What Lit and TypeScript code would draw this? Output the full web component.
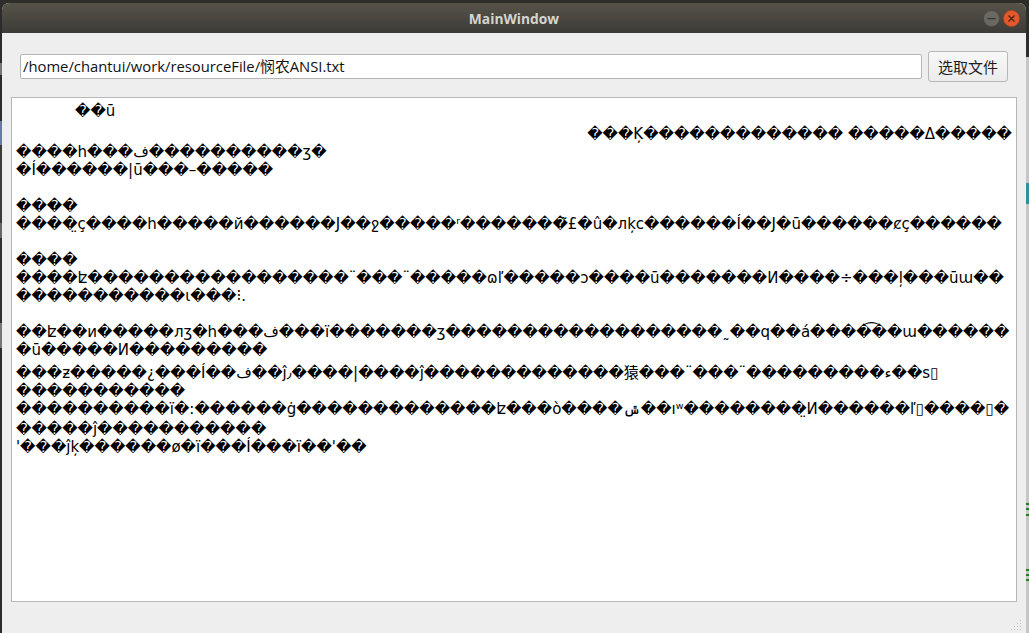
import { LitElement, html, css } from "lit";
import { customElement } from "lit/decorators.js";

const F = "\uFFFD";
const L = (s: string) => s.replace(/#/g, F);

const lines: { t: string; cls?: string }[] = [
  { t: "##ū", cls: "indent" },
  { t: "###Ķ############# #####Δ#####", cls: "right gap" },
  { t: "####h###ف##########ʒ#" },
  { t: "#Í######|ū###–#####" },
  { t: "\u00a0" },
  { t: "####" },
  { t: "####̤ç####h#####й######J##ջ#####ʳ#######̃£#û#лķc######Í##J#ū######ȼç######" },
  { t: "\u00a0" },
  { t: "####" },
  { t: "####ʫ#################¨###¨#####ɷľ#####ɔ####ū#######И####÷###ļ###ūɯ##" },
  { t: "###########ɩ###⁝." },
  { t: "\u00a0" },
  { t: "##ʫ##и#####лʒ#h###ف###ï#######ʒ##################˷##q##á####͡##ɯ######" },
  { t: "#ū#####И#########" },
  { t: "###ƶ#####¿###Í##ف##ĵ٫####|####ĵ#############猿###¨###¨#########ء##s▯", cls: "tall" },
  { t: "###########" },
  { t: "##########ï#:######ġ#############ʫ###ò####ݜ##ıʷ########̤И######ľ▯####▯#" },
  { t: "#####ĵ###########", cls: "mid" },
  { t: "'###ĵķ######ø#ï###Í###ï##'##" },
];

@customElement("app-root")
export class AppRoot extends LitElement {
  static styles = css`
    :host {
      display: block;
      width: 1029px;
      height: 633px;
      overflow: hidden;
      background: #2e2d29;
      font-family: "Open Sans", "DejaVu Sans", "Noto Sans CJK SC", sans-serif;
    }
    .desk { height: 100%; box-sizing: border-box; padding-top: 3px; display: flex; }
    .strip-left {
      width: 2px; flex: none;
      background: linear-gradient(#2b2b2b 0 60px, #777 60px 72px, #2b2b2b 72px 118px, #6a78a8 118px 142px, #3a3a3a 142px 220px, #666 220px 235px, #2f2f2f 235px 320px, #777 320px 345px, #2c2c2c 345px);
    }
    .strip-right {
      width: 3px; flex: none;
      background: linear-gradient(#2e2d29 0 54px, #c6c6c6 54px 180px, #2f8f9f 180px 201px, #c6c6c6 201px 500px, #1f7f1f 500px 502px, #c6c6c6 502px 505px, #1f7f1f 505px 507px, #c6c6c6 507px 511px, #1f7f1f 511px 513px, #c6c6c6 513px 566px, #1f7f1f 566px 568px, #c6c6c6 568px 571px, #1f7f1f 571px 573px, #c6c6c6 573px 576px, #1f7f1f 576px 578px, #c6c6c6 578px);
    }
    .window { flex: 1; display: flex; flex-direction: column; background: #eeeeee; border-radius: 7px 7px 0 0; overflow: hidden; position: relative; }
    .title {
      height: 30px; flex: none; display: flex; align-items: center; justify-content: center;
      background: linear-gradient(#575349, #3c3b37);
      color: #d6d4cf; font-weight: 700; font-size: 13.8px; position: relative;
    }
    .btns { position: absolute; right: 6px; top: 6.5px; display: flex; gap: 3px; }
    .btns svg { display: block; }
    .body { flex: 1; display: flex; flex-direction: column; padding: 18px 9px 31px 9px; gap: 15px; min-height: 0; }
    .row { display: flex; align-items: center; gap: 6px; padding: 0 9px; }
    .path {
      flex: 1; height: 25px; box-sizing: border-box; border: 1px solid #b4b4b4; border-radius: 2px; background: #fff;
      padding: 0 2px; font-size: 14.8px; line-height: 23px; color: #111; display: flex; align-items: center;
    }
    .pick {
      width: 80px; height: 31px; box-sizing: border-box; border: 1px solid #b8b8b8; border-radius: 3px;
      background: linear-gradient(#f8f8f8, #ececec); color: #1d1d1d; font-size: 15px;
      font-family: "Noto Sans CJK SC", sans-serif; display: flex; align-items: center; justify-content: center;
    }
    .text {
      flex: 1; background: #fff; border: 1px solid #b8b8b8; box-sizing: border-box; padding: 4px 4px 0 4px;
      font-family: "DejaVu Sans", "Noto Sans CJK SC", sans-serif; font-size: 15px; line-height: 18px; color: #000; overflow: hidden;
    }
    .l { white-space: pre; height: 18px; }
    .indent { padding-left: 59px; }
    .right { text-align: right; }
    .gap { margin-top: 5px; }
    .tall { margin-top: 5px; }
    .mid { margin-top: 2px; }
    .grip { position: absolute; right: 3px; bottom: 2px; }
  `;

  render() {
    return html`<div class="desk"><div class="strip-left"></div><div class="window">
      <div class="title">MainWindow
        <div class="btns">
          <svg width="17" height="17" viewBox="0 0 17 17"><circle cx="8.5" cy="8.5" r="8" fill="#6a6862" stroke="#44433e" stroke-width=".6"/><rect x="4.5" y="8" width="8" height="1.3" fill="#35342f"/></svg>
          <svg width="17" height="17" viewBox="0 0 17 17"><circle cx="8.5" cy="8.5" r="8" fill="#e2582b" stroke="#b8451f" stroke-width=".6"/><path d="M5.5 5.5l6 6M11.5 5.5l-6 6" stroke="#4a2413" stroke-width="1.3"/></svg>
        </div>
      </div>
      <div class="body">
        <div class="row">
          <div class="path">/home/chantui/work/resourceFile/悯农ANSI.txt</div>
          <div class="pick">选取文件</div>
        </div>
        <div class="text">${lines.map((l) => html`<div class="l ${l.cls ?? ""}">${L(l.t)}</div>`)}</div>
      </div>
      <svg class="grip" width="12" height="12" viewBox="0 0 12 12" fill="#c4c4c4">
        <rect x="9" y="1" width="1" height="1"/><rect x="6" y="4" width="1" height="1"/><rect x="9" y="4" width="1" height="1"/>
        <rect x="3" y="7" width="1" height="1"/><rect x="6" y="7" width="1" height="1"/><rect x="9" y="7" width="1" height="1"/>
        <rect x="0" y="10" width="1" height="1"/><rect x="3" y="10" width="1" height="1"/><rect x="6" y="10" width="1" height="1"/><rect x="9" y="10" width="1" height="1"/>
      </svg>
    </div><div class="strip-right"></div></div>`;
  }
}
